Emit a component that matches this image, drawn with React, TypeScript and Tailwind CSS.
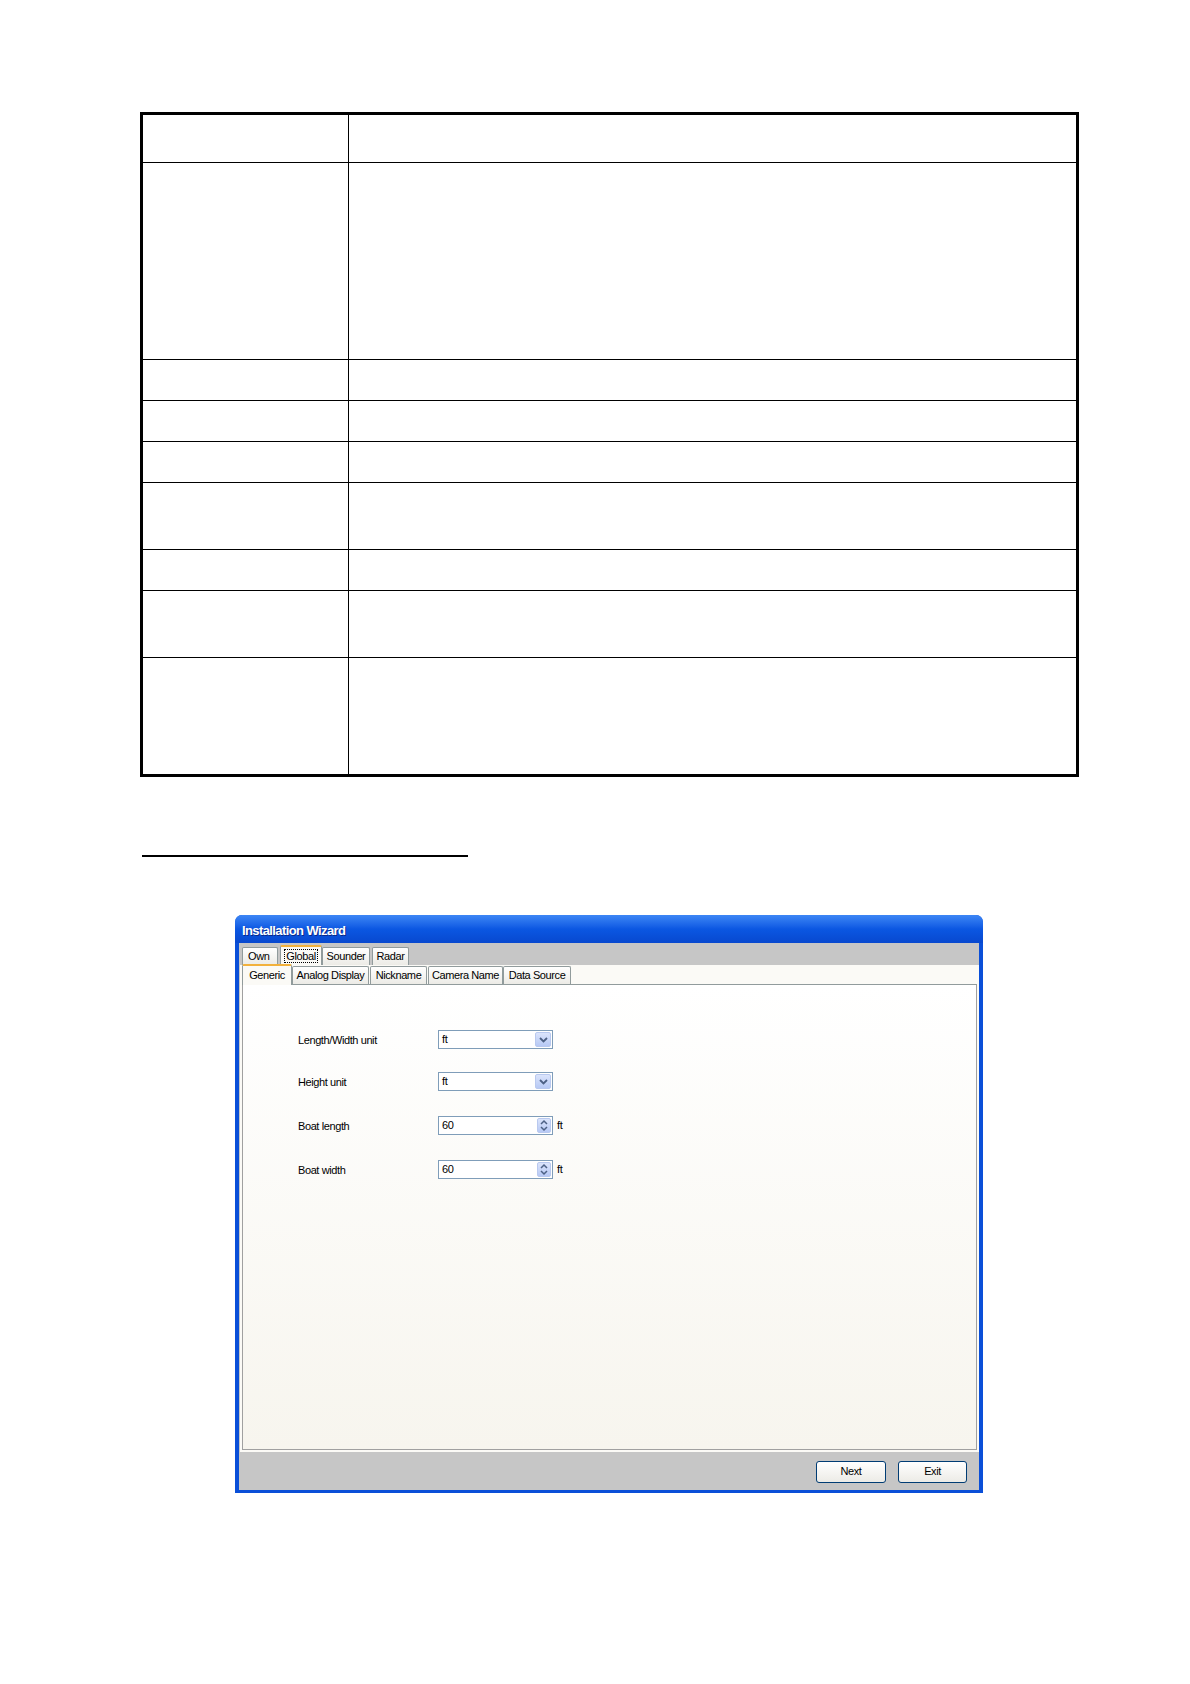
import React from 'react';

const rowHeights = ['h-[48px]', 'h-[197px]', 'h-[41px]', 'h-[41px]', 'h-[41px]', 'h-[67px]', 'h-[41px]', 'h-[67px]', 'h-[116px]'];

function Chevron() {
  return (
    <svg width="9" height="6" viewBox="0 0 9 6">
      <path d="M1 1 L4.5 4.5 L8 1" fill="none" stroke="#4d6185" strokeWidth="1.8" />
    </svg>
  );
}

function SpinArrows() {
  return (
    <svg width="8" height="13" viewBox="0 0 8 13">
      <path d="M1 5 L4 2 L7 5" fill="none" stroke="#4d6185" strokeWidth="1.5" />
      <path d="M1 8 L4 11 L7 8" fill="none" stroke="#4d6185" strokeWidth="1.5" />
    </svg>
  );
}

function ComboField({ value }: { value: string }) {
  return (
    <div className="flex h-[19px] w-[115px] items-stretch border border-[#7f9db9] bg-white p-px">
      <span className="flex-1 pl-[2px] text-[11px] leading-[15px]">{value}</span>
      <span className="flex w-[16px] items-center justify-center rounded-[2px] border border-[#b9c9ef] bg-gradient-to-b from-[#dbe4fb] to-[#b7c9f5]">
        <Chevron />
      </span>
    </div>
  );
}

function SpinField({ value }: { value: string }) {
  return (
    <div className="flex items-center gap-[4px]">
      <div className="flex h-[19px] w-[115px] items-stretch border border-[#7f9db9] bg-white p-px">
        <span className="flex-1 pl-[2px] text-[11px] leading-[15px]">{value}</span>
        <span className="flex w-[14px] items-center justify-center rounded-[2px] border border-[#b9c9ef] bg-gradient-to-b from-[#dbe4fb] to-[#b7c9f5]">
          <SpinArrows />
        </span>
      </div>
      <span className="text-[11px]">ft</span>
    </div>
  );
}

const fields = [
  { label: 'Length/Width unit', kind: 'combo', value: 'ft', mt: 'mt-0' },
  { label: 'Height unit', kind: 'combo', value: 'ft', mt: 'mt-[23px]' },
  { label: 'Boat length', kind: 'spin', value: '60', mt: 'mt-[25px]' },
  { label: 'Boat width', kind: 'spin', value: '60', mt: 'mt-[25px]' },
];

export default function App() {
  return (
    <div className="relative h-[1684px] w-[1190px] bg-white pt-[112px] text-black [font-family:'Liberation_Sans',Arial,sans-serif]">
      {/* spec table (empty cells) */}
      <div className="ml-[140px] w-[939px] border-[3px] border-black">
        {rowHeights.map((h, i) => (
          <div key={i} className={`flex ${h} ${i < rowHeights.length - 1 ? 'border-b border-black' : ''}`}>
            <div className="w-[206px] border-r border-black" />
            <div className="flex-1" />
          </div>
        ))}
      </div>

      {/* underlined heading rule */}
      <div className="ml-[142px] mt-[78px] h-[2px] w-[326px] bg-black" />

      {/* Installation Wizard window */}
      <div className="ml-[235px] mt-[58px] flex h-[578px] w-[748px] flex-col overflow-hidden rounded-t-[7px] bg-[#0a4fd8]">
        <div className="flex h-[28px] shrink-0 items-center bg-gradient-to-b from-[#3d86f5] via-[#0b57e2] to-[#0848cf] pl-[7px] pt-[3px] text-[13px] font-bold tracking-[-0.6px] text-white [text-shadow:1px_1px_0_#0a2a8a]">
          Installation Wizard
        </div>
        <div className="flex flex-1 flex-col px-[4px] pb-[3px]">
          <div className="flex flex-1 flex-col bg-[#c6c6c6]">
            {/* top tabs */}
            <div className="flex h-[22px] shrink-0 items-end pl-[3px] text-[11px] tracking-[-0.4px]">
              <div className="flex h-[18px] w-[36px] items-center rounded-t-[2px] border border-b-0 border-[#919b9c] bg-gradient-to-b from-white to-[#ecebe6] pl-[5px]">Own</div>
              <div className="ml-[2px] flex h-[20px] w-[42px] items-center justify-center rounded-t-[2px] border-x border-t-[2px] border-[#919b9c] border-t-[#f2b13c] bg-[#fbfaf6]">
                <span className="border border-dotted border-black px-[1px] leading-[12px]">Global</span>
              </div>
              <div className="flex h-[18px] w-[48px] items-center justify-center rounded-t-[2px] border border-b-0 border-[#919b9c] bg-gradient-to-b from-white to-[#ecebe6]">Sounder</div>
              <div className="ml-[2px] flex h-[18px] w-[37px] items-center justify-center rounded-t-[2px] border border-b-0 border-[#919b9c] bg-gradient-to-b from-white to-[#ecebe6]">Radar</div>
            </div>

            {/* tab panel */}
            <div className="ml-px flex flex-1 flex-col bg-[#fbfaf6] px-[2px] pb-[2px]">
              <div className="flex h-[20px] shrink-0 items-end border-b border-[#919b9c] text-[11px] tracking-[-0.4px]">
                <div className="-mb-px flex h-[21px] w-[50px] items-center justify-center rounded-t-[2px] border-x border-t-[2px] border-[#919b9c] border-t-[#f2b13c] bg-[#fbfaf6]">Generic</div>
                <div className="flex h-[18px] w-[77px] items-center justify-center rounded-t-[2px] border border-b-0 border-[#919b9c] bg-gradient-to-b from-white to-[#ecebe6]">Analog Display</div>
                <div className="ml-px flex h-[18px] w-[57px] items-center justify-center rounded-t-[2px] border border-b-0 border-[#919b9c] bg-gradient-to-b from-white to-[#ecebe6]">Nickname</div>
                <div className="ml-px flex h-[18px] w-[75px] items-center justify-center rounded-t-[2px] border border-b-0 border-[#919b9c] bg-gradient-to-b from-white to-[#ecebe6]">Camera Name</div>
                <div className="flex h-[18px] w-[68px] items-center justify-center rounded-t-[2px] border border-b-0 border-[#919b9c] bg-gradient-to-b from-white to-[#ecebe6]">Data Source</div>
              </div>
              <div className="flex flex-1 flex-col border-x border-b border-[#a0a0a0] bg-gradient-to-b from-white to-[#f7f5ee] pl-[55px] pt-[45px] text-[11px] tracking-[-0.4px]">
                {fields.map((f) => (
                  <div key={f.label} className={`flex items-center ${f.mt}`}>
                    <span className="w-[140px] pt-[2px]">{f.label}</span>
                    {f.kind === 'combo' ? <ComboField value={f.value} /> : <SpinField value={f.value} />}
                  </div>
                ))}
              </div>
            </div>

            {/* bottom button bar */}
            <div className="mt-px flex h-[37px] shrink-0 items-center justify-end gap-[12px] pr-[12px] text-[11px] tracking-[-0.4px]">
              <button className="h-[22px] w-[70px] rounded-[3px] border border-[#003c74] bg-gradient-to-b from-white to-[#ecebe6]">Next</button>
              <button className="h-[22px] w-[69px] rounded-[3px] border border-[#003c74] bg-gradient-to-b from-white to-[#ecebe6]">Exit</button>
            </div>
          </div>
        </div>
      </div>
    </div>
  );
}
